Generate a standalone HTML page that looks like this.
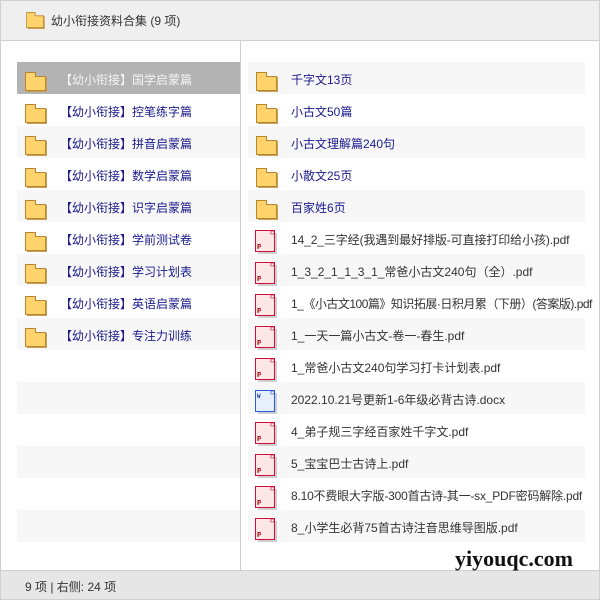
<!DOCTYPE html>
<html><head><meta charset="utf-8"><style>
*{margin:0;padding:0;box-sizing:border-box}
body{width:600px;height:600px;overflow:hidden;background:#fff;font-family:"Liberation Sans","Noto Sans CJK SC",sans-serif;font-size:12px;position:relative}
.hdr{position:absolute;left:0;top:0;width:600px;height:41px;background:#efefef;border:1px solid #d0d0d0;border-bottom:1px solid #cfcfcf}
.hdr span{position:absolute;left:50px;top:11px;color:#333;font-size:12px}
.main{position:absolute;left:0;top:41px;width:600px;height:529px;border-left:1px solid #d0d0d0;border-right:1px solid #d0d0d0}
.div{position:absolute;left:240px;top:41px;width:1px;height:529px;background:#d0d0d0}
.row{position:absolute;height:32px;line-height:36px}
.g{background:#f7f7f7}
.sel{background:#b3b3b3}
.fo{position:absolute;top:10px;width:22px;height:20px}
.t{position:absolute;white-space:nowrap}
.foot{position:absolute;left:0;top:570px;width:600px;height:30px;background:#e6e6e6;border:1px solid #d0d0d0;color:#333}
.foot span{position:absolute;left:24px;top:7px}
.wm{position:absolute;left:455px;top:546px;font-family:"Liberation Serif",serif;font-weight:bold;font-size:22px;color:#111}
</style></head><body>
<svg width="0" height="0" style="position:absolute"><defs>
<symbol id="f" viewBox="0 0 22 20"><rect x="2" y="5" width="20" height="15" fill="#c8a058"/><path d="M0.5 0.5h10v4h10v14h-20z" fill="#ffd36b" stroke="#b8862e"/></symbol>
<symbol id="p" viewBox="0 0 22 24"><rect x="3" y="3" width="19" height="21" fill="#cfcfcf"/><rect x="0.5" y="0.5" width="19" height="21" fill="#fde6e6" stroke="#d0103a"/><rect x="16" y="1" width="3" height="3" fill="#fff" stroke="#d0103a" stroke-width=".7"/><text x="2" y="19" font-size="7" font-family="Liberation Mono" fill="#a00" font-weight="bold">P</text></symbol>
<symbol id="w" viewBox="0 0 22 24"><rect x="3" y="3" width="19" height="21" fill="#cfcfcf"/><rect x="0.5" y="0.5" width="19" height="21" fill="#e6f0fd" stroke="#2a5bd0"/><rect x="16" y="1" width="3" height="3" fill="#fff" stroke="#2a5bd0" stroke-width=".7"/><text x="2" y="8" font-size="6" font-family="Liberation Mono" fill="#1a3aa0" font-weight="bold">W</text></symbol>
</defs></svg>
<div class="hdr"><svg style="position:absolute;left:25px;top:11px" width="19" height="17" viewBox="0 0 22 20"><use href="#f"/></svg><span>幼小衔接资料合集 (9 项)</span></div>
<div class="main"></div>
<div class="div"></div>

<div class="row sel" style="left:17px;top:62px;width:223px"><svg class="fo" style="left:8px" viewBox="0 0 22 20"><use href="#f"/></svg><span class="t" style="left:43px;color:#f4f4f4">【幼小衔接】国学启蒙篇</span></div>
<div class="row" style="left:17px;top:94px;width:223px"><svg class="fo" style="left:8px" viewBox="0 0 22 20"><use href="#f"/></svg><span class="t" style="left:43px;color:#1a1a8c">【幼小衔接】控笔练字篇</span></div>
<div class="row g" style="left:17px;top:126px;width:223px"><svg class="fo" style="left:8px" viewBox="0 0 22 20"><use href="#f"/></svg><span class="t" style="left:43px;color:#1a1a8c">【幼小衔接】拼音启蒙篇</span></div>
<div class="row" style="left:17px;top:158px;width:223px"><svg class="fo" style="left:8px" viewBox="0 0 22 20"><use href="#f"/></svg><span class="t" style="left:43px;color:#1a1a8c">【幼小衔接】数学启蒙篇</span></div>
<div class="row g" style="left:17px;top:190px;width:223px"><svg class="fo" style="left:8px" viewBox="0 0 22 20"><use href="#f"/></svg><span class="t" style="left:43px;color:#1a1a8c">【幼小衔接】识字启蒙篇</span></div>
<div class="row" style="left:17px;top:222px;width:223px"><svg class="fo" style="left:8px" viewBox="0 0 22 20"><use href="#f"/></svg><span class="t" style="left:43px;color:#1a1a8c">【幼小衔接】学前测试卷</span></div>
<div class="row g" style="left:17px;top:254px;width:223px"><svg class="fo" style="left:8px" viewBox="0 0 22 20"><use href="#f"/></svg><span class="t" style="left:43px;color:#1a1a8c">【幼小衔接】学习计划表</span></div>
<div class="row" style="left:17px;top:286px;width:223px"><svg class="fo" style="left:8px" viewBox="0 0 22 20"><use href="#f"/></svg><span class="t" style="left:43px;color:#1a1a8c">【幼小衔接】英语启蒙篇</span></div>
<div class="row g" style="left:17px;top:318px;width:223px"><svg class="fo" style="left:8px" viewBox="0 0 22 20"><use href="#f"/></svg><span class="t" style="left:43px;color:#1a1a8c">【幼小衔接】专注力训练</span></div>
<div class="row g" style="left:17px;top:382px;width:223px"></div>
<div class="row g" style="left:17px;top:446px;width:223px"></div>
<div class="row g" style="left:17px;top:510px;width:223px"></div>

<div class="row g" style="left:248px;top:62px;width:337px"><svg class="fo" style="left:8px" viewBox="0 0 22 20"><use href="#f"/></svg><span class="t" style="left:43px;color:#1a1a8c">千字文13页</span></div>
<div class="row" style="left:248px;top:94px;width:337px"><svg class="fo" style="left:8px" viewBox="0 0 22 20"><use href="#f"/></svg><span class="t" style="left:43px;color:#1a1a8c">小古文50篇</span></div>
<div class="row g" style="left:248px;top:126px;width:337px"><svg class="fo" style="left:8px" viewBox="0 0 22 20"><use href="#f"/></svg><span class="t" style="left:43px;color:#1a1a8c">小古文理解篇240句</span></div>
<div class="row" style="left:248px;top:158px;width:337px"><svg class="fo" style="left:8px" viewBox="0 0 22 20"><use href="#f"/></svg><span class="t" style="left:43px;color:#1a1a8c">小散文25页</span></div>
<div class="row g" style="left:248px;top:190px;width:337px"><svg class="fo" style="left:8px" viewBox="0 0 22 20"><use href="#f"/></svg><span class="t" style="left:43px;color:#1a1a8c">百家姓6页</span></div>
<div class="row" style="left:248px;top:222px;width:337px"><svg class="fo" style="left:7px;top:8px;height:24px" viewBox="0 0 22 24"><use href="#p"/></svg><span class="t" style="left:43px;color:#333;letter-spacing:-0.1px">14_2_三字经(我遇到最好排版-可直接打印给小孩).pdf</span></div>
<div class="row g" style="left:248px;top:254px;width:337px"><svg class="fo" style="left:7px;top:8px;height:24px" viewBox="0 0 22 24"><use href="#p"/></svg><span class="t" style="left:43px;color:#333">1_3_2_1_1_3_1_常爸小古文240句（全）.pdf</span></div>
<div class="row" style="left:248px;top:286px;width:337px"><svg class="fo" style="left:7px;top:8px;height:24px" viewBox="0 0 22 24"><use href="#p"/></svg><span class="t" style="left:43px;color:#333;letter-spacing:-0.5px">1_《小古文100篇》知识拓展·日积月累（下册）(答案版).pdf</span></div>
<div class="row g" style="left:248px;top:318px;width:337px"><svg class="fo" style="left:7px;top:8px;height:24px" viewBox="0 0 22 24"><use href="#p"/></svg><span class="t" style="left:43px;color:#333">1_一天一篇小古文-卷一-春生.pdf</span></div>
<div class="row" style="left:248px;top:350px;width:337px"><svg class="fo" style="left:7px;top:8px;height:24px" viewBox="0 0 22 24"><use href="#p"/></svg><span class="t" style="left:43px;color:#333">1_常爸小古文240句学习打卡计划表.pdf</span></div>
<div class="row g" style="left:248px;top:382px;width:337px"><svg class="fo" style="left:7px;top:8px;height:24px" viewBox="0 0 22 24"><use href="#w"/></svg><span class="t" style="left:43px;color:#333">2022.10.21号更新1-6年级必背古诗.docx</span></div>
<div class="row" style="left:248px;top:414px;width:337px"><svg class="fo" style="left:7px;top:8px;height:24px" viewBox="0 0 22 24"><use href="#p"/></svg><span class="t" style="left:43px;color:#333">4_弟子规三字经百家姓千字文.pdf</span></div>
<div class="row g" style="left:248px;top:446px;width:337px"><svg class="fo" style="left:7px;top:8px;height:24px" viewBox="0 0 22 24"><use href="#p"/></svg><span class="t" style="left:43px;color:#333">5_宝宝巴士古诗上.pdf</span></div>
<div class="row" style="left:248px;top:478px;width:337px"><svg class="fo" style="left:7px;top:8px;height:24px" viewBox="0 0 22 24"><use href="#p"/></svg><span class="t" style="left:43px;color:#333;letter-spacing:-0.2px">8.10不费眼大字版-300首古诗-其一-sx_PDF密码解除.pdf</span></div>
<div class="row g" style="left:248px;top:510px;width:337px"><svg class="fo" style="left:7px;top:8px;height:24px" viewBox="0 0 22 24"><use href="#p"/></svg><span class="t" style="left:43px;color:#333">8_小学生必背75首古诗注音思维导图版.pdf</span></div>

<div class="foot"><span>9 项 | 右侧: 24 项</span></div>
<div class="wm">yiyouqc.com</div>
</body></html>
